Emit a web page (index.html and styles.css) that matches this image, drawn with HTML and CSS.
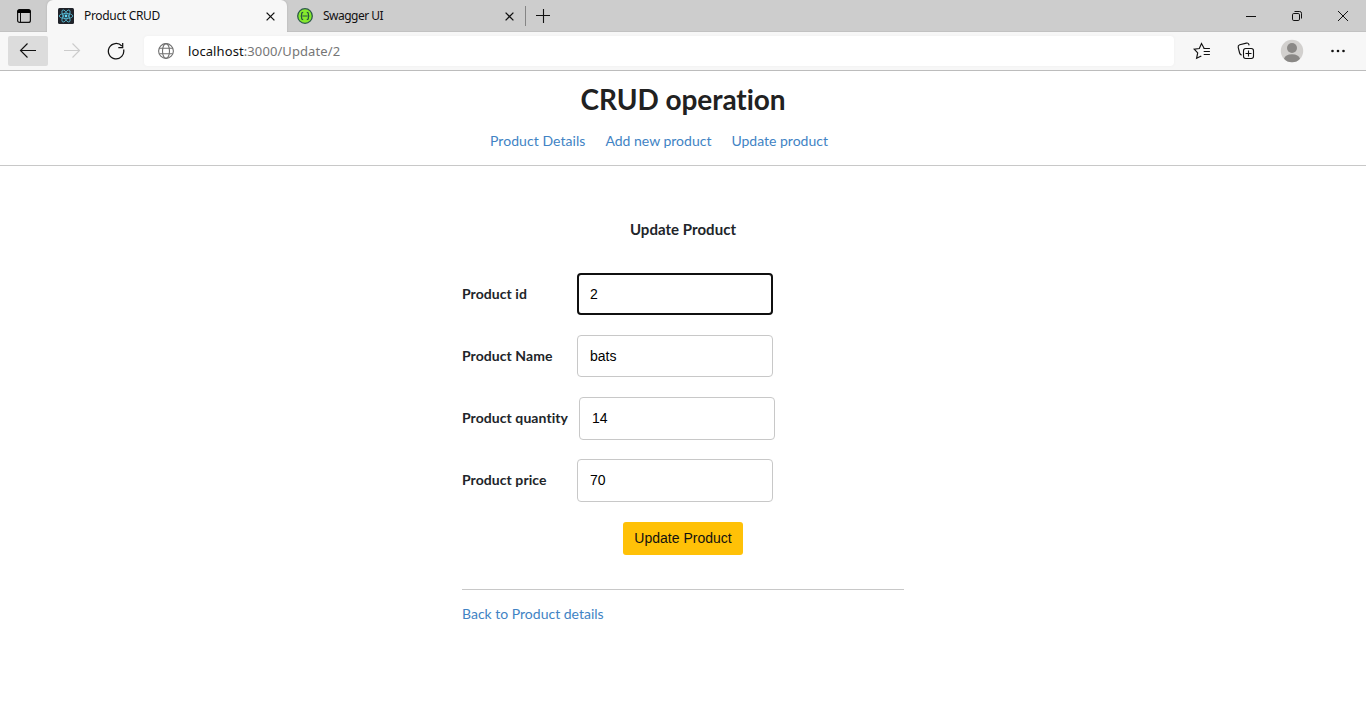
FILE: index.html
```html
<!DOCTYPE html>
<html lang="en">
<head>
<meta charset="utf-8">
<title>Product CRUD</title>
<link rel="stylesheet" href="styles.css">
</head>
<body>
<div class="tabs">
  <div class="tab-menu"><svg width="16" height="16" viewBox="0 0 16 16"><rect x="1.6" y="1.6" width="12.8" height="12.8" rx="2" fill="none" stroke="#111" stroke-width="1.2"/><path d="M1.5 5V3.3Q1.5 1.5 3.3 1.5h9.4q1.8 0 1.8 1.8V5z" fill="#000"/><path d="M4.5 5v9" stroke="#111"/></svg></div>
  <div class="tab tab-active">
    <svg class="favicon" width="16" height="16" viewBox="0 0 16 16"><rect width="16" height="16" rx="1.5" fill="#20232a"/><g fill="none" stroke="#55b7d0" stroke-width=".85"><ellipse cx="8" cy="8" rx="6.8" ry="2.6"/><ellipse cx="8" cy="8" rx="6.8" ry="2.6" transform="rotate(60 8 8)"/><ellipse cx="8" cy="8" rx="6.8" ry="2.6" transform="rotate(120 8 8)"/></g><circle cx="8" cy="8" r="1.4" fill="#61dafb"/></svg>
    <span class="tab-title title-product">Product CRUD</span>
    <svg class="close" width="9" height="9" viewBox="0 0 9 9"><path d="M.6.6l7.8 7.8M8.4.6L.6 8.4" stroke="#111" stroke-width="1.3"/></svg>
  </div>
  <div class="tab tab-second">
    <svg class="favicon" width="16" height="16" viewBox="0 0 16 16"><circle cx="8" cy="8" r="7.3" fill="#85ea2d" stroke="#2d5b49" stroke-width="1.3"/><path d="M6.2 4.4q-1.6 0-1.6 1.4v1.1Q4.6 8 3.6 8q1 0 1 1.1v1.1q0 1.4 1.6 1.4M9.8 4.4q1.6 0 1.6 1.4v1.1q0 1.1 1 1.1-1 0-1 1.1v1.1q0 1.4-1.6 1.4M5.3 8h5.4" fill="none" stroke="#285242" stroke-width="1.2"/></svg>
    <span class="tab-title title-swagger">Swagger UI</span>
    <svg class="close" width="9" height="9" viewBox="0 0 9 9"><path d="M.6.6l7.8 7.8M8.4.6L.6 8.4" stroke="#111" stroke-width="1.3"/></svg>
  </div>
  <svg class="new-tab" width="14" height="14" viewBox="0 0 14 14"><path d="M7.5 0v14M0 6.5h14" stroke="#111" stroke-width="1.1"/></svg>
  <div class="window-buttons">
    <svg width="12" height="12" viewBox="0 0 12 12"><path d="M1 6.5h10" stroke="#111"/></svg>
    <svg width="12" height="12" viewBox="0 0 12 12"><rect x="1.5" y="3.5" width="7" height="7" rx="1.3" fill="none" stroke="#111"/><path d="M3.5 1.5h5.2q1.8 0 1.8 1.8v5.2" fill="none" stroke="#111"/></svg>
    <svg width="12" height="12" viewBox="0 0 12 12"><path d="M1 1l10 10M11 1L1 11" stroke="#111"/></svg>
  </div>
</div>
<div class="toolbar">
  <div class="nav-button back"><svg width="18" height="16" viewBox="0 0 18 16"><path d="M17 7.5H1.5M8.5.5l-7 7 7 7" fill="none" stroke="#111" stroke-width="1.15"/></svg></div>
  <div class="nav-button forward"><svg width="18" height="16" viewBox="0 0 18 16"><path d="M1 7.5h15.5M9.5.5l7 7-7 7" fill="none" stroke="#ccc" stroke-width="1.15"/></svg></div>
  <div class="nav-button reload"><svg width="18" height="18" viewBox="0 0 18 18"><path d="M16.6 7.5A7.7 7.7 0 1 1 14.8 4M15.7 1v4.5h-4.4" fill="none" stroke="#111" stroke-width="1.25"/></svg></div>
  <div class="address">
    <svg width="18" height="18" viewBox="0 0 18 18"><g fill="none" stroke="#707070" stroke-width="1.1"><circle cx="9" cy="9" r="7.4"/><ellipse cx="9" cy="9" rx="3.5" ry="7.4"/><path d="M2.3 6.3h13.4M2.3 11.7h13.4"/></g></svg>
    <span class="url"><span class="host">localhost</span>:3000/Update/2</span>
  </div>
  <div class="actions">
    <svg width="18" height="18" viewBox="0 0 18 18"><path d="M15.3 6.5h-4.1L8.5 1.5 6.3 6.5 1.2 7.2l3.5 3.7-1.1 5.4 4.7-2.4" fill="none" stroke="#111" stroke-width="1.15"/><path d="M10.7 6.5h6.2M10.7 9.5h6.2M10.7 12.5h6.2" stroke="#111" stroke-width="1.1"/></svg>
    <svg width="18" height="18" viewBox="0 0 18 18"><path d="M4.6 13.1Q3 12.5 2.6 11L1.2 5.3Q.8 3.4 2.7 2.8l6.7-1.7q1.8-.4 2.4 1.2l.3 1" fill="none" stroke="#111" stroke-width="1.15"/><rect x="6.5" y="6.5" width="10" height="10" rx="2.2" fill="#f7f7f7" stroke="#111" stroke-width="1.1"/><path d="M11.5 8.5v6M8.5 11.5h6" stroke="#111" stroke-width="1.1"/></svg>
    <svg width="24" height="24" viewBox="0 0 24 24"><circle cx="12" cy="12" r="11.2" fill="#d2d0ce"/><circle cx="12" cy="9" r="5" fill="#8a8886"/><path d="M4 19.7Q5.4 15.2 12 15.2t8 4.5Q17 23.2 12 23.2T4 19.7" fill="#8a8886"/></svg>
    <svg width="16" height="4" viewBox="0 0 16 4"><g fill="#111"><circle cx="2.5" cy="2" r="1.3"/><circle cx="8" cy="2" r="1.3"/><circle cx="13.5" cy="2" r="1.3"/></g></svg>
  </div>
</div>
<header class="header">
  <h1 class="title">CRUD operation</h1>
  <nav class="links"><a>Product Details</a><a>Add new product</a><a>Update product</a></nav>
</header>
<main class="content">
  <h2 class="subtitle">Update Product</h2>
  <form class="form">
    <div class="row"><label class="label" for="id">Product id</label><input class="field field-focus" id="id" value="2"></div>
    <div class="row"><label class="label" for="name">Product Name</label><input class="field" id="name" value="bats"></div>
    <div class="row"><label class="label label-wide" for="quantity">Product quantity</label><input class="field field-tall" id="quantity" value="14"></div>
    <div class="row"><label class="label" for="price">Product price</label><input class="field field-tall" id="price" value="70"></div>
    <button class="submit" type="button">Update Product</button>
  </form>
  <footer class="footer"><a>Back to Product details</a></footer>
</main>
</body>
</html>
```
FILE: styles.css
```css
* { box-sizing: border-box; }
body { margin: 0; height: 717px; overflow: hidden; background: #fff; color: #212529; font: 14px/20px Lato, sans-serif; font-variant-ligatures: none; }
svg { display: block; flex: none; }
.tabs { height: 32px; display: flex; align-items: center; background: #cdcdcd; box-shadow: inset 0 -1px #c2c2c2; }
.tab-menu { width: 47px; padding-left: 16px; }
.tab { height: 32px; display: flex; align-items: center; font: 12px/16px "Noto Sans", sans-serif; color: #111; }
.tab-active { width: 240px; padding: 0 12px 0 11px; background: #f7f7f7; border-radius: 6px 6px 0 0; box-shadow: 0 0 2px #aaa; clip-path: inset(0 -2px 0 -2px); }
.tab-second { width: 239px; height: 20px; padding: 0 11px 0 10px; border-right: 1px solid #858585; }
.tab-title { margin-left: 10px; white-space: nowrap; }
.title-product { letter-spacing: -.32px; }
.title-swagger { letter-spacing: -.52px; }
.close { margin-left: auto; }
.new-tab { margin-left: 10px; }
.window-buttons { margin-left: auto; padding-right: 17px; display: flex; gap: 34px; }
.toolbar { height: 39px; display: flex; align-items: center; padding-left: 8px; background: #f7f7f7; border-bottom: 1px solid #bcbcbc; }
.nav-button { height: 30px; display: flex; align-items: center; justify-content: center; }
.back { width: 40px; background: #dcdcdc; border-radius: 2px; }
.forward { width: 48px; }
.reload { width: 40px; }
.address { width: 1030px; height: 30px; margin-left: 8px; padding-left: 13px; display: flex; align-items: center; gap: 13px; background: #fff; border-radius: 4px; box-shadow: 0 0 3px #eee; }
.url { font: 13px/20px "Noto Sans", sans-serif; letter-spacing: .09px; color: #767676; }
.host { color: #111; }
.actions { flex: 1; display: flex; align-items: center; padding-left: 19px; }
.actions svg:nth-child(2) { margin-left: 26px; }
.actions svg:nth-child(3) { margin-left: 25px; }
.actions svg:nth-child(4) { margin-left: 26px; }
.header { height: 95px; padding-top: 10px; border-bottom: 1px solid #c8c8c8; }
.title { margin: 0; color: #212121; font-size: 28px; line-height: 36px; font-weight: 700; letter-spacing: -.05px; text-align: center; }
.links { display: flex; gap: 20px; margin: 14px 0 0 490px; }
.links a, .footer a { color: #4183c4; }
.links a:first-child { letter-spacing: .06px; }
.content { width: 442px; margin-left: 462px; padding-top: 53px; }
.subtitle { margin: 0; font-size: 15px; line-height: 20px; font-weight: 700; letter-spacing: .04px; text-align: center; }
.form { margin-top: 34px; display: grid; grid-auto-rows: 42px; row-gap: 20px; }
.row { display: flex; align-items: center; }
.label { width: 115px; font-weight: 700; letter-spacing: .07px; }
.label-wide { width: 117px; }
.field { width: 196px; height: 42px; padding: 0 12px; border: 1px solid #c8c8c8; border-radius: 4px; outline: none; color: #000; font: 14px "Liberation Sans", sans-serif; }
.field-focus { border: 2px solid #101010; padding: 0 11px; }
.field-tall { height: 43px; }
.submit { width: 120px; height: 33px; margin: 1px 0 0 161px; padding: 0 0 2px; border: 0; border-radius: 3px; background: #ffc107; color: #111; font: 14px "Liberation Sans", sans-serif; }
.footer { margin-top: 26px; padding-top: 14px; border-top: 1px solid #c8c8c8; }
```
